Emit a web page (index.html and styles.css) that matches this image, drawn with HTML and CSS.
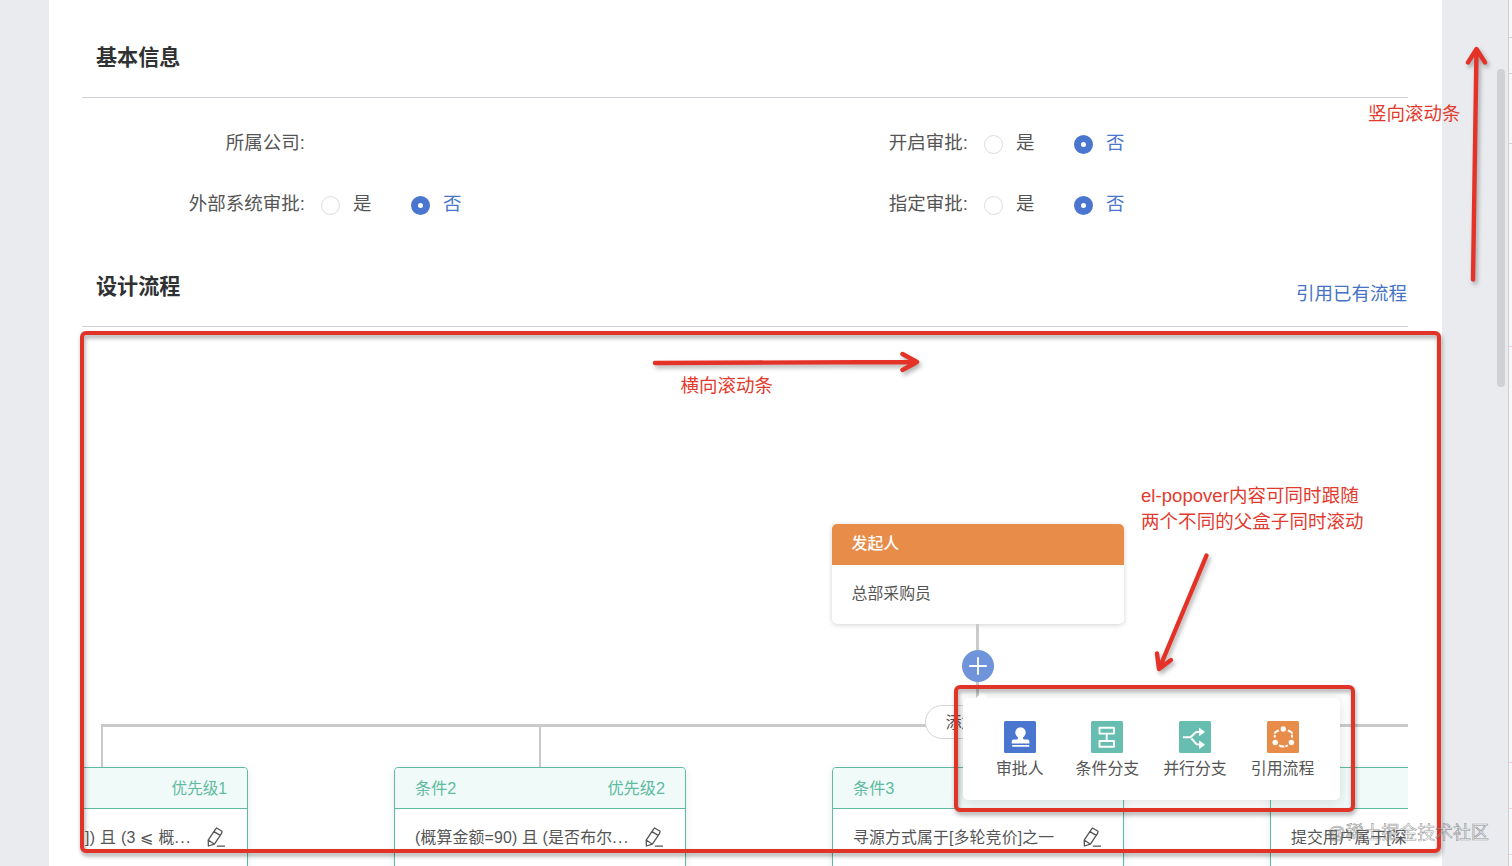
FILE: index.html
```
<!DOCTYPE html>
<html lang="zh-CN">
<head>
<meta charset="utf-8">
<title>设计流程</title>
<link rel="stylesheet" href="styles.css">
</head>
<body>
<svg class="defs" width="0" height="0">
  <symbol id="pen" viewBox="0 0 18 20">
    <path d="M8.2 2.600 L9.600 1 L15 4.300 L14.600 6.400 L7.400 17.200 L1.400 19 L1.200 13.200 Z M7 4.600 L13.200 8.400 M1.500 13.200 L6.800 16.800 M9.800 19.200 H18" fill="none" stroke="#555" stroke-width="1.300" stroke-linejoin="round"/>
  </symbol>
</svg>
<main class="panel">
  <header class="section-head"><h2>基本信息</h2></header>
  <section class="form">
    <div class="field"><span class="label">所属公司:</span></div>
    <div class="field"><span class="label">开启审批:</span><span class="radio"></span><span class="opt">是</span><span class="radio on"></span><span class="opt on">否</span></div>
    <div class="field"><span class="label">外部系统审批:</span><span class="radio"></span><span class="opt">是</span><span class="radio on"></span><span class="opt on">否</span></div>
    <div class="field"><span class="label">指定审批:</span><span class="radio"></span><span class="opt">是</span><span class="radio on"></span><span class="opt on">否</span></div>
  </section>
  <header class="section-head design"><h2>设计流程</h2><a class="link">引用已有流程</a></header>
  <section class="canvas">
    <div class="start-wrap">
      <article class="start"><h3>发起人</h3><p>总部采购员</p></article>
      <div class="stem"></div>
      <div class="add"><svg width="20" height="20" viewBox="0 0 20 20"><path d="M10 1.200V18.800M1.200 10H18.800" stroke="#fff" stroke-width="1.800"/></svg></div>
      <div class="stem low"></div>
    </div>
    <div class="bus"></div>
    <div class="pill">添加条件</div>
    <div class="branches">
      <div class="branch"><article class="card"><header><span></span><span class="narrow">优先级1</span></header><div class="rule"><span class="tail">]) 且 (3 ⩽ 概<span class="dots">...</span></span><svg class="pen"><use href="#pen"/></svg></div></article></div>
      <div class="branch"><article class="card"><header><span>条件2</span><span>优先级2</span></header><div class="rule"><span class="long">(概算金额=90) 且 (是否布尔<span class="dots">...</span></span><svg class="pen"><use href="#pen"/></svg></div></article></div>
      <div class="branch"><article class="card"><header><span>条件3</span><span></span></header><div class="rule"><span class="mid">寻源方式属于[多轮竞价]之一</span><svg class="pen"><use href="#pen"/></svg></div></article></div>
      <div class="branch"><article class="card"><header><span></span></header><div class="rule"><span>提交用户属于[深</span></div></article></div>
    </div>
  </section>
</main>
<aside class="gutter"><div class="thumb"></div></aside>
<aside class="edge"><i></i><i></i><i></i><i class="pink"></i><i class="pink"></i><i class="pink"></i><i class="pink"></i></aside>

<div class="popover">
  <div class="item"><svg viewBox="0 0 32 32"><rect width="32" height="32" rx="1.500" fill="#4a76cf"/><circle cx="16.500" cy="11.500" r="5.200" fill="#fff"/><path d="M14.300 15h4.400l.7 3.500h4q2 0 2 2v2H7.700v-2q0-2 2-2h3.900zM8.200 24h17v1.800h-17z" fill="#fff"/></svg><span>审批人</span></div>
  <div class="item"><svg viewBox="0 0 32 32"><rect width="32" height="32" rx="1.500" fill="#67bdb0"/><path d="M8.500 6.800h14.500v5.800H8.500zM8.500 20h14.500v5.800H8.500zM15.700 12.600V20" fill="none" stroke="#fff" stroke-width="1.900" stroke-linejoin="round"/></svg><span>条件分支</span></div>
  <div class="item"><svg viewBox="0 0 32 32"><rect width="32" height="32" rx="1.500" fill="#67bdb0"/><path d="M4 16.200h7.500L16.500 11.500Q17.300 10.800 20.500 10.800M12.500 17.500L16.500 22.200Q17.400 23.600 20.500 23.600" fill="none" stroke="#fff" stroke-width="2"/><path d="M20.500 7.200L25.500 10.900L20.500 14.600zM20.500 20L25.500 23.700L20.500 27.400z" fill="#fff" stroke="#fff" stroke-width=".8" stroke-linejoin="round"/></svg><span>并行分支</span></div>
  <div class="item"><svg viewBox="0 0 32 32"><rect width="32" height="32" rx="1.500" fill="#e78d49"/><g fill="#fff"><circle cx="16.300" cy="8" r="2.700"/><circle cx="8.200" cy="21.500" r="2.700"/><circle cx="24.400" cy="21.500" r="2.700"/></g><path d="M11.800 9.500Q7.800 10.800 7.800 12.500V16.500M20.800 9.500Q25 10.800 25 12.500V16.500M12 24.300Q16.300 26.700 20.800 24.300" fill="none" stroke="#fff" stroke-width="2" stroke-dasharray="5.500 1.200"/></svg><span>引用流程</span></div>
</div>

<div class="frame big"></div>
<div class="frame small"></div>
<svg class="arrows" width="1512" height="866" viewBox="0 0 1512 866">
  <path d="M1473 279.500L1476.500 50M1468 62.500L1476.500 49L1485 62.500"/>
  <path d="M655 363L916 362M902.500 354L917 362L902.500 370"/>
  <path d="M1206.500 555.500L1159.500 668M1157 653.500L1159 669L1171 660"/>
</svg>
<p class="note n1">竖向滚动条</p>
<p class="note n2">横向滚动条</p>
<p class="note n3">el-popover内容可同时跟随<br>两个不同的父盒子同时滚动</p>
<p class="watermark">@稀土掘金技术社区</p>
</body>
</html>
```
FILE: styles.css
```
* { box-sizing: border-box; }
body {
  margin: 0;
  position: relative;
  width: 1512px;
  height: 866px;
  overflow: hidden;
  display: flex;
  padding-left: 49px;
  background: #e9ebef;
  color: #555;
  font-family: "Liberation Sans", "Noto Sans CJK SC", sans-serif;
  font-size: 18.5px;
}
h2, h3, p { margin: 0; }
.defs { position: absolute; }

.panel { width: 1393px; height: 866px; padding: 0 34px 0 33px; background: #fff; overflow: hidden; }
.section-head {
  height: 98px;
  padding: 42px 1px 0 14px;
  display: flex;
  justify-content: space-between;
  border-bottom: 1px solid #cdd0d5;
}
.section-head h2 { font-size: 21.100px; line-height: 32px; font-weight: 700; color: #303133; }
.section-head.design { height: 92px; padding-top: 36px; }
.link { color: #4573c6; line-height: 46px; }

.form {
  height: 137px;
  padding-top: 16px;
  display: grid;
  grid-template-columns: 663px 663px;
  grid-template-rows: 61px 61px;
}
.field { display: flex; align-items: center; height: 60px; }
.label, .opt { line-height: 26px; padding-bottom: 2px; }
.label { width: 223px; margin-right: 16px; text-align: right; white-space: nowrap; }
.radio { width: 19px; height: 19px; border-radius: 50%; border: 1px solid #d9dce2; }
.radio.on { border: 7.300px solid #4a76cf; background: #fff; }
.opt { width: 58px; margin-left: 13px; }
.opt.on { color: #4a76cf; }

.canvas { position: relative; height: 539px; overflow: hidden; font-size: 15.900px; }
.start-wrap { width: 292px; margin: 197px 0 0 749.500px; display: flex; flex-direction: column; align-items: center; }
.start { width: 292px; height: 100px; border-radius: 5px; background: #fff; box-shadow: 0 1px 5px rgba(0,0,0,.18); overflow: hidden; }
.start h3 { height: 41px; padding-left: 20px; line-height: 39px; font-size: 15.900px; font-weight: 500; color: #fff; background: #e78d49; }
.start p { padding-left: 20px; line-height: 58px; }
.stem { width: 2.500px; height: 26px; background: #cacaca; }
.add { width: 32px; height: 32px; border-radius: 50%; background: #7094d9; display: grid; place-items: center; }
.bus { height: 3px; margin: 16px 0 0 19px; background: #cacaca; }
.pill {
  position: absolute;
  left: 843px;
  top: 378px;
  width: 105px;
  height: 34px;
  border: 1px solid #d5d5d5;
  border-radius: 17px;
  background: #fff;
  text-align: center;
  line-height: 34px;
}
.branches { display: flex; gap: 146px; margin-left: -126px; width: 1606px; }
.branch { width: 292px; flex: none; display: flex; flex-direction: column; align-items: center; }
.branch::before { content: ""; width: 2.500px; height: 40px; background: #cacaca; }
.card { width: 292px; height: 140px; border: 1.500px solid #5fbaa1; border-radius: 4px; background: #fff; box-shadow: 0 2px 8px rgba(60,120,140,.13); }
.card header { height: 41px; padding: 0 20px; display: flex; justify-content: space-between; line-height: 40px; border-bottom: 1px solid #5fbaa1; border-radius: 3px 3px 0 0; background: #f0faf9; color: #5fbaa1; font-size: 16.200px; }
.card header .narrow { font-size: 15.600px; line-height: 41px; }
.rule { height: 55px; padding: 0 22px 0 20px; display: flex; align-items: center; justify-content: space-between; white-space: nowrap; }
.tail { margin-left: 108px; letter-spacing: .3px; }
.long { letter-spacing: .15px; }
.mid { letter-spacing: .12px; }
.dots { letter-spacing: 1.300px; }
.pen { width: 18px; height: 20px; }

.gutter { width: 66px; padding: 69px 3px 0 55px; }
.thumb { width: 8px; height: 318px; border-radius: 4px; background: #cfd1d5; }
.edge { width: 4px; border-left: 1px solid #cfcfd2; background: #f8f8fa; display: grid; grid-template-rows: 38px 36px 70px 203px 416px 46px 46px; align-content: start; }
.edge i { border-bottom: 1px solid #d3d3d6; }
.edge i.pink { border-color: #f1cfd2; }

.popover {
  position: absolute;
  left: 963px;
  top: 698px;
  width: 377px;
  height: 102px;
  padding: 23px 13px 0;
  display: flex;
  background: #fff;
  border-radius: 5px;
  box-shadow: 0 2px 13px rgba(0,0,0,.13);
  font-size: 15.900px;
}
.popover::before { content: ""; position: absolute; left: 12px; top: -6px; border: 7px solid transparent; border-top: 0; border-bottom: 7px solid #fff; }
.item { width: 87.600px; flex: none; display: flex; flex-direction: column; align-items: center; }
.item svg { width: 32px; height: 32px; }
.item span { line-height: 32px; white-space: nowrap; }

.frame { position: absolute; border: 4px solid #e03429; border-radius: 6px; filter: drop-shadow(1px 3px 2px rgba(0,0,0,.35)); }
.frame.big { left: 80px; top: 330.500px; width: 1361px; height: 522.500px; }
.frame.small { left: 954px; top: 685px; width: 401px; height: 127px; }
.arrows { position: absolute; left: 0; top: 0; filter: drop-shadow(2px 3px 2px rgba(0,0,0,.3)); }
.arrows path { fill: none; stroke: #e53228; stroke-width: 4.400; stroke-linecap: round; stroke-linejoin: round; }
.note { position: absolute; color: #e23a2e; line-height: 26px; white-space: nowrap; }
.n1 { left: 1368px; top: 101px; }
.n2 { left: 680.500px; top: 373px; }
.n3 { left: 1141px; top: 482.600px; letter-spacing: .05px; }
.watermark { position: absolute; left: 1327.500px; top: 819.500px; font-size: 17.900px; line-height: 26px; white-space: nowrap; color: rgba(255,255,255,.25); -webkit-text-stroke: .6px rgba(80,80,80,.6); }
```
